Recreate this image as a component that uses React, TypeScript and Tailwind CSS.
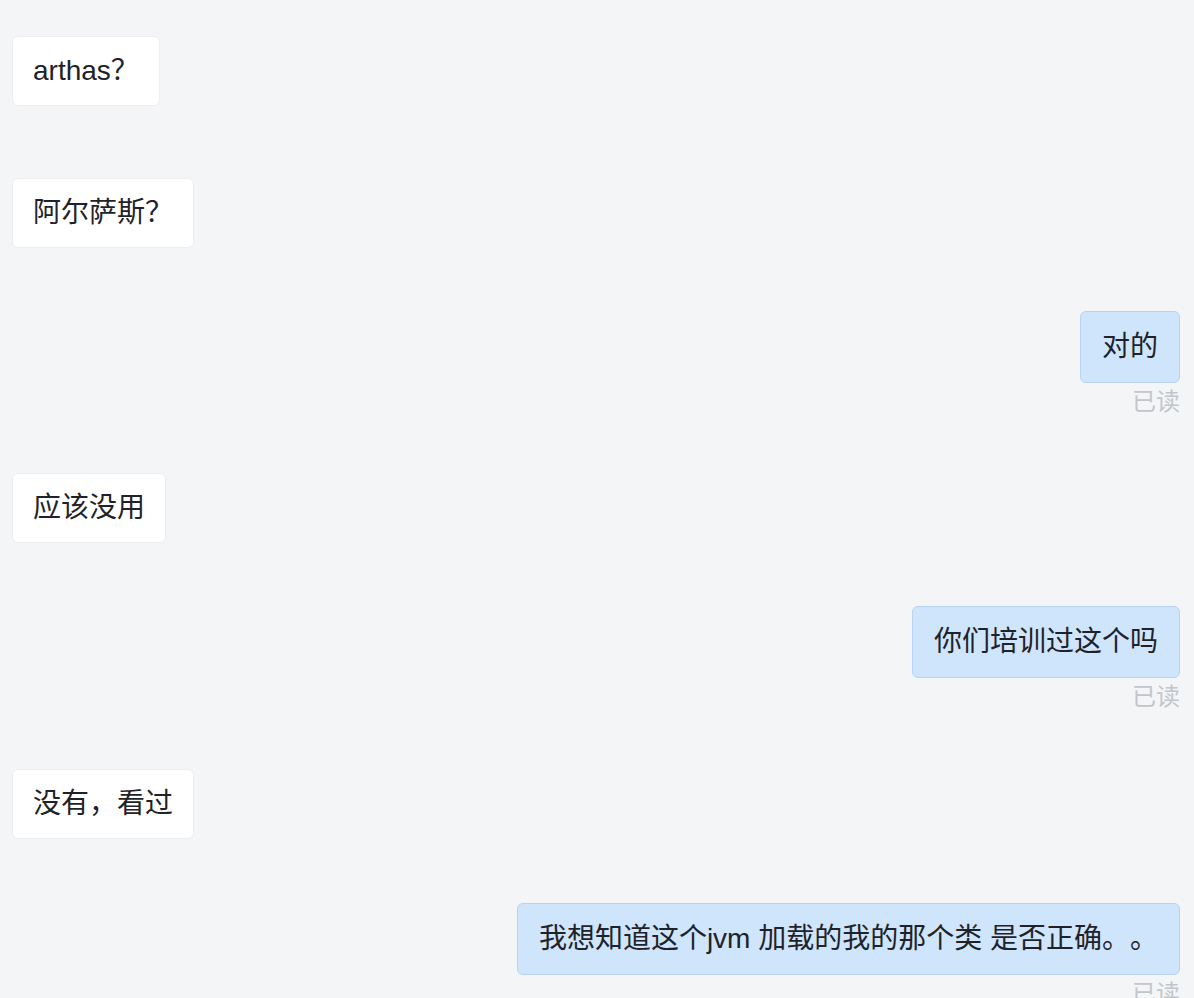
import React from "react";

type Msg = {
  text: string;
  mine: boolean;
  gap: string;
};

const messages: Msg[] = [
  { text: "arthas？", mine: false, gap: "mt-[36px]" },
  { text: "阿尔萨斯？", mine: false, gap: "mt-[72px]" },
  { text: "对的", mine: true, gap: "mt-[63px]" },
  { text: "应该没用", mine: false, gap: "mt-[58px]" },
  { text: "你们培训过这个吗", mine: true, gap: "mt-[63px]" },
  { text: "没有，看过", mine: false, gap: "mt-[59px]" },
  { text: "我想知道这个jvm 加载的我的那个类 是否正确。。", mine: true, gap: "mt-[64px]" },
];

function Bubble({ msg }: { msg: Msg }) {
  if (!msg.mine) {
    return (
      <div className={`flex justify-start ${msg.gap}`}>
        <div className="rounded-[6px] border border-[#eceef1] bg-white px-[20px] py-[20px] text-[28px] leading-[28px] text-[#1f2329]">
          {msg.text}
        </div>
      </div>
    );
  }
  return (
    <div className={`flex flex-col items-end ${msg.gap}`}>
      <div className="rounded-[6px] border border-[#b7d3f1] bg-[#cfe5fc] px-[21px] py-[21px] text-[28px] leading-[28px] text-[#1f2329]">
        {msg.text}
      </div>
      <div className="mt-[6px] text-[24px] leading-[26px] text-[#c2c5cb]">已读</div>
    </div>
  );
}

export default function App() {
  return (
    <div
      className="h-[998px] w-full overflow-hidden bg-[#f4f5f7] pl-[12px] pr-[14px] [text-spacing-trim:space-all]"
      style={{ fontFamily: '"Liberation Sans", "Noto Sans CJK SC", sans-serif' }}
    >
      {messages.map((m, i) => (
        <Bubble key={i} msg={m} />
      ))}
    </div>
  );
}
